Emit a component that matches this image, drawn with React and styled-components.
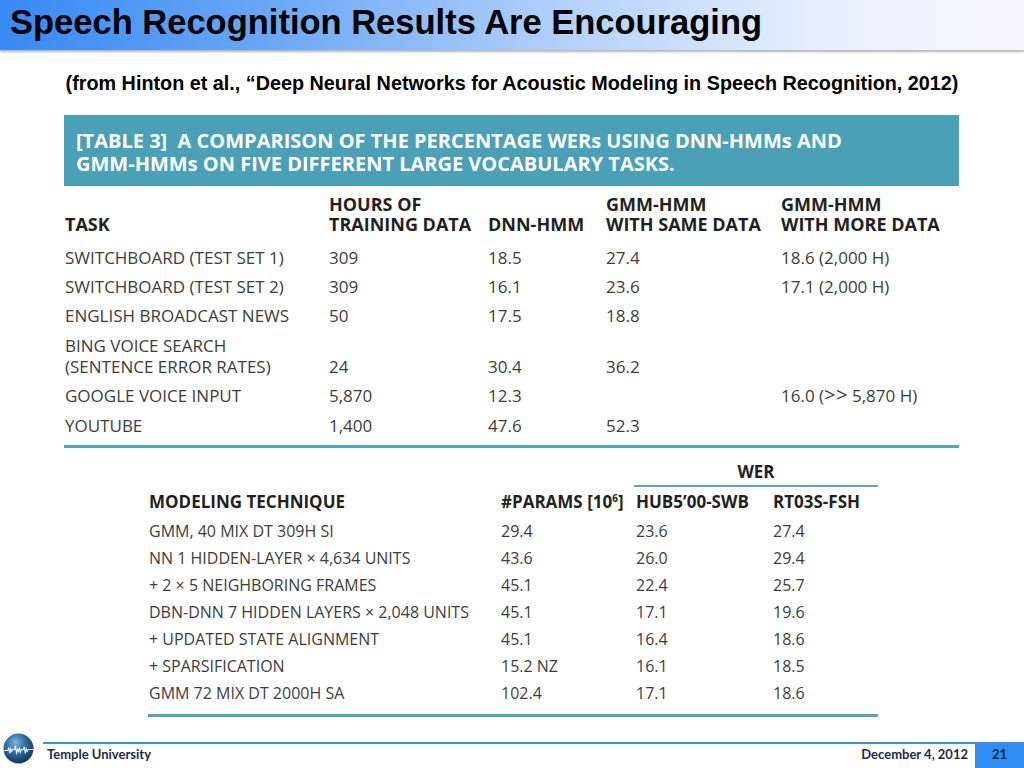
import React from "react";
import styled, { createGlobalStyle } from "styled-components";

const Global = createGlobalStyle`
  html, body { margin: 0; padding: 0; background: #fff; }
  body { font-family: "Liberation Sans", Arial, sans-serif; }
`;

const Page = styled.div`
  width: 1024px;
  height: 768px;
  display: flex;
  flex-direction: column;
  overflow: hidden;
  background: #fff;
`;

const TitleBar = styled.header`
  height: 50px;
  flex: none;
  display: flex;
  align-items: center;
  box-sizing: border-box;
  padding: 0 0 6px 10px;
  background: linear-gradient(90deg, #3789f4 0%, #67a6f6 25%, #b3d0fa 55%, #e6effd 80%, #f7f9fe 100%);
  box-shadow: 0 2px 2px rgba(120, 120, 120, 0.55);
`;

const Title = styled.h1`
  margin: 0;
  font-family: "Liberation Sans", Arial, sans-serif;
  font-weight: 700;
  font-size: 34.5px;
  color: #000;
  line-height: 40px;
`;

const Citation = styled.p`
  margin: 22px 0 0;
  text-align: center;
  font-family: "Liberation Sans", Arial, sans-serif;
  font-weight: 700;
  font-size: 19.8px;
  line-height: 22px;
  color: #000;
`;

const TEAL = "#4aa0b6";

const TableOne = styled.section`
  margin: 21px 0 0 64px;
  width: 895px;
  font-family: "Open Sans", sans-serif;
`;

const Caption = styled.div`
  background: ${TEAL};
  height: 71px;
  box-sizing: border-box;
  padding: 14px 0 0 12px;
  color: #fff;
  font-weight: 700;
  font-size: 20px;
  line-height: 23px;
`;

const Grid = styled.div`
  display: grid;
  grid-template-columns: ${(p) => p.$cols};
  padding-left: ${(p) => p.$indent || 0}px;
`;

const HeadCell = styled.div`
  align-self: end;
  font-weight: 700;
  color: #231f20;
  font-size: ${(p) => p.$size || 18}px;
  line-height: ${(p) => p.$lh || 20}px;
  white-space: nowrap;
`;

const Cell = styled.div`
  align-self: end;
  color: #3d3d3d;
  font-size: ${(p) => p.$size || 17}px;
  line-height: ${(p) => p.$lh || 21}px;
  padding: ${(p) => p.$pad || 4.25}px 0;
  white-space: nowrap;
`;

const Wide = styled.span`
  font-size: 20px;
  line-height: 0;
  letter-spacing: 0.5px;
  margin-right: 4px;
`;

const HeadRow = styled(Grid)`
  margin: ${(p) => p.$m};
`;

const Rule = styled.div`
  height: ${(p) => p.$h || 3}px;
  background: #55a6bb;
  margin: ${(p) => p.$m || 0};
`;

const TableTwo = styled.section`
  margin: 15px 0 0 148px;
  width: 730px;
  font-family: "Open Sans", sans-serif;
`;

const WerHead = styled.div`
  margin-left: 486px;
  text-align: center;
  font-weight: 700;
  color: #231f20;
  font-size: 17px;
  line-height: 18px;
  padding-bottom: 4px;
  border-bottom: 2px solid #5aa8bd;
`;

const Sup = styled.sup`
  font-size: 10px;
  vertical-align: 6px;
  line-height: 0;
`;

const Footer = styled.footer`
  margin-top: auto;
  height: 35px;
  flex: none;
  display: flex;
  align-items: flex-end;
`;

const LogoBox = styled.div`
  width: 43px;
  flex: none;
  height: 35px;
  display: flex;
  align-items: flex-start;
  padding: 0 0 0 3px;
  box-sizing: border-box;
`;

const FooterMain = styled.div`
  flex: 1;
  height: 26px;
  border-top: 2px solid #3b8ee6;
  display: flex;
  align-items: center;
  box-sizing: border-box;
`;

const FootText = styled.span`
  font-family: Lato, "Open Sans", sans-serif;
  font-weight: 700;
  font-size: 13px;
  color: #1e2a46;
  padding-left: ${(p) => p.$pl || 0}px;
  margin-top: -4px;
`;

const Spacer = styled.div`
  flex: 1;
`;

const PageNum = styled.div`
  width: 49px;
  height: 100%;
  margin-left: 7px;
  background: #2e8cf2;
  display: flex;
  align-items: center;
  justify-content: center;
  padding-bottom: 4px;
  box-sizing: border-box;
  font-family: Lato, "Open Sans", sans-serif;
  font-weight: 700;
  font-size: 13px;
  color: #16213b;
`;

const Logo = () => (
  <svg width="31" height="31" viewBox="0 0 32 32">
    <defs>
      <radialGradient id="gl" cx="0.4" cy="0.3" r="0.75">
        <stop offset="0" stopColor="#7fb3dc" />
        <stop offset="0.45" stopColor="#2e6ea3" />
        <stop offset="1" stopColor="#0d2f55" />
      </radialGradient>
    </defs>
    <circle cx="16" cy="16" r="15.5" fill="url(#gl)" />
    <path
      d="M1 18 L5 18 L6 15 L7 21 L8 16 L9 19 L10 17 L12 17 L13 13 L14 22 L15 16 L16 19 L17 15 L18 20 L19 17 L21 17 L22 14 L23 21 L24 16 L25 19 L26 17 L31 17"
      fill="none"
      stroke="#e8f2fb"
      strokeWidth="1.1"
    />
  </svg>
);

const t1Cols = "264px 159px 118px 175px 178px";
const t1Rows = [
  [["SWITCHBOARD (TEST SET 1)"], "309", "18.5", "27.4", "18.6 (2,000 H)"],
  [["SWITCHBOARD (TEST SET 2)"], "309", "16.1", "23.6", "17.1 (2,000 H)"],
  [["ENGLISH BROADCAST NEWS"], "50", "17.5", "18.8", ""],
  [["BING VOICE SEARCH", "(SENTENCE ERROR RATES)"], "24", "30.4", "36.2", ""],
  [["GOOGLE VOICE INPUT"], "5,870", "12.3", "", "wide"],
  [["YOUTUBE"], "1,400", "47.6", "52.3", ""],
];

const t2Cols = "352px 135px 137px 106px";
const t2Rows = [
  ["GMM, 40 MIX DT 309H SI", "29.4", "23.6", "27.4"],
  ["NN 1 HIDDEN-LAYER × 4,634 UNITS", "43.6", "26.0", "29.4"],
  ["+ 2 × 5 NEIGHBORING FRAMES", "45.1", "22.4", "25.7"],
  ["DBN-DNN 7 HIDDEN LAYERS × 2,048 UNITS", "45.1", "17.1", "19.6"],
  ["+ UPDATED STATE ALIGNMENT", "45.1", "16.4", "18.6"],
  ["+ SPARSIFICATION", "15.2 NZ", "16.1", "18.5"],
  ["GMM 72 MIX DT 2000H SA", "102.4", "17.1", "18.6"],
];

export default function App() {
  return (
    <Page>
      <Global />
      <TitleBar>
        <Title>Speech Recognition Results Are Encouraging</Title>
      </TitleBar>
      <Citation>
        (from Hinton et al., “Deep Neural Networks for Acoustic Modeling in Speech Recognition, 2012)
      </Citation>

      <TableOne>
        <Caption>
          [TABLE 3]&nbsp; A COMPARISON OF THE PERCENTAGE WERs USING DNN-HMMs AND
          <br />
          GMM-HMMs ON FIVE DIFFERENT LARGE VOCABULARY TASKS.
        </Caption>
        <HeadRow $cols={t1Cols} $indent={1} $m="8px 0 8.5px">
          <HeadCell>TASK</HeadCell>
          <HeadCell>HOURS OF<br />TRAINING DATA</HeadCell>
          <HeadCell>DNN-HMM</HeadCell>
          <HeadCell>GMM-HMM<br />WITH SAME DATA</HeadCell>
          <HeadCell>GMM-HMM<br />WITH MORE DATA</HeadCell>
        </HeadRow>
        {t1Rows.map((r, i) => (
          <Grid key={i} $cols={t1Cols} $indent={1}>
            <Cell $pad={4.2}>
              {r[0].map((l, j) => (
                <React.Fragment key={j}>
                  {j > 0 && <br />}
                  {l}
                </React.Fragment>
              ))}
            </Cell>
            <Cell $pad={4.2}>{r[1]}</Cell>
            <Cell $pad={4.2}>{r[2]}</Cell>
            <Cell $pad={4.2}>{r[3]}</Cell>
            <Cell $pad={4.2}>
              {r[4] === "wide" ? (
                <>
                  16.0 (<Wide>&gt;&gt;</Wide>5,870 H)
                </>
              ) : (
                r[4]
              )}
            </Cell>
          </Grid>
        ))}
        <Rule $m="5px 0 0" />
      </TableOne>

      <TableTwo>
        <WerHead>WER</WerHead>
        <HeadRow $cols={t2Cols} $indent={1} $m="4px 0 5px">
          <HeadCell $size={17} $lh={22}>MODELING TECHNIQUE</HeadCell>
          <HeadCell $size={17} $lh={22}>
            #PARAMS [10<Sup>6</Sup>]
          </HeadCell>
          <HeadCell $size={17} $lh={22}>HUB5’00-SWB</HeadCell>
          <HeadCell $size={17} $lh={22}>RT03S-FSH</HeadCell>
        </HeadRow>
        {t2Rows.map((r, i) => (
          <Grid key={i} $cols={t2Cols} $indent={1}>
            {r.map((c, j) => (
              <Cell key={j} $size={16} $lh={21} $pad={3}>
                {c}
              </Cell>
            ))}
          </Grid>
        ))}
        <Rule $m="7px 0 0" />
      </TableTwo>

      <Footer>
        <LogoBox>
          <Logo />
        </LogoBox>
        <FooterMain>
          <FootText $pl={4}>Temple University</FootText>
          <Spacer />
          <FootText>December 4, 2012</FootText>
          <PageNum>21</PageNum>
        </FooterMain>
      </Footer>
    </Page>
  );
}
